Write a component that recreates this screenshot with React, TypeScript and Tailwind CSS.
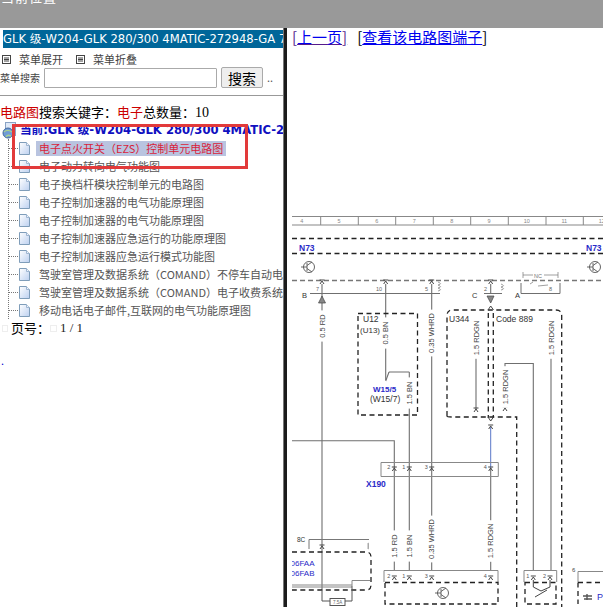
import React from "react";

const cjk = "font-['Noto_Sans_CJK_SC','Liberation_Sans',sans-serif]";

const items = [
  "电子点火开关（EZS）控制单元电路图",
  "电子动力转向电气功能图",
  "电子换档杆模块控制单元的电路图",
  "电子控制加速器的电气功能原理图",
  "电子控制加速器的电气功能原理图",
  "电子控制加速器应急运行的功能原理图",
  "电子控制加速器应急运行模式功能图",
  "驾驶室管理及数据系统（COMAND）不停车自动电子收费系统",
  "驾驶室管理及数据系统（COMAND）电子收费系统功能图",
  "移动电话电子邮件,互联网的电气功能原理图",
];

function PageIcon() {
  return (
    <svg width="13" height="15" viewBox="0 0 13 15" className="shrink-0">
      <defs>
        <linearGradient id="pg" x1="0" y1="0" x2="1" y2="1">
          <stop offset="0" stopColor="#ffffff" />
          <stop offset="1" stopColor="#bcd0f0" />
        </linearGradient>
      </defs>
      <path d="M1.5 1.5H8.5L11.5 4.5V13.5H1.5Z" fill="url(#pg)" stroke="#7f9db9" strokeWidth="1" />
      <path d="M8.5 1.5V4.5H11.5" fill="#eef4fc" stroke="#9fb6d2" strokeWidth="1" />
    </svg>
  );
}

function RootIcon() {
  return (
    <svg width="17" height="17" viewBox="0 0 17 17" className="shrink-0">
      <rect x="3.5" y="0.5" width="10" height="13" fill="#dfe9f7" stroke="#8aa3c4" />
      <circle cx="6" cy="11" r="5" fill="#6f9bd6" stroke="#41679e" />
      <path d="M2 10c2-2 5-2 8 0M4 15c1-2 3-2 5-1" stroke="#a8d08d" strokeWidth="1.4" fill="none" />
    </svg>
  );
}

function MenuGlyph() {
  return (
    <svg width="9" height="9" viewBox="0 0 9 9" className="shrink-0">
      <rect x="0.5" y="0.5" width="8" height="8" fill="none" stroke="#444" />
      <path d="M2 3H7M2 4.5H7M2 6H7" stroke="#444" />
    </svg>
  );
}

const G = "#6f6f6f";

function WireLabel({ x, y, t }: { x: number; y: number; t: string }) {
  return (
    <g transform={`translate(${x + 2.5} ${y}) rotate(-90)`}>
      <rect x={-t.length * 2.6} y={-6.5} width={t.length * 5.2} height={8} fill="#fff" />
      <text textAnchor="middle" fontSize="7.5" fill="#444" fontFamily="Liberation Sans">
        {t}
      </text>
    </g>
  );
}

function Pin({ x, y }: { x: number; y: number }) {
  return (
    <path
      d={`M${x - 2.5} ${y - 2}H${x + 2.5}M${x - 2} ${y + 2}L${x} ${y - 1}L${x + 2} ${y + 2}`}
      stroke="#444"
      strokeWidth="1"
      fill="none"
    />
  );
}

function Transistor({ x, y }: { x: number; y: number }) {
  return (
    <g stroke="#555" fill="none" strokeWidth="0.9">
      <circle cx={x} cy={y} r="5.5" />
      <path d={`M${x - 8} ${y}H${x - 2}M${x - 2} ${y - 4}V${y + 4}M${x - 2} ${y - 1.5}L${x + 3} ${y - 5}M${x - 2} ${y + 1.5}L${x + 3} ${y + 5}`} />
    </g>
  );
}

function Diagram() {
  const ticks = [320.7, 358.3, 395.7, 433.3, 470.7, 508.3, 546, 583.3];
  const nums = [
    [301.7, "4"], [339, "5"], [376.7, "6"], [414.3, "7"], [451.7, "8"],
    [489, "9"], [526.7, "10"], [564.3, "11"], [601.7, "12"],
  ] as const;
  const blue = "#2a2ac8";
  const dash = { stroke: "#222", strokeWidth: 1.3, strokeDasharray: "5 3.5", fill: "none" };
  return (
    <svg width="311" height="407" viewBox="292 200 311 407" className="block ml-[5px] shrink-0" fontFamily="Liberation Sans">
      {/* ruler */}
      <path d="M292 216.5H603M292 225H603" stroke="#888" strokeWidth="1.2" />
      {ticks.map((t) => (
        <path key={t} d={`M${t} 216V225`} stroke="#888" />
      ))}
      {nums.map(([x, n]) => (
        <text key={n} x={x} y="223" fontSize="5.5" fill="#888" textAnchor="middle">{n}</text>
      ))}
      <path d="M292 238.5H603M292 253.5H603" {...dash} />
      <text x="299" y="251" fontSize="8.5" fontWeight="bold" fill={blue}>N73</text>
      <text x="586" y="251" fontSize="8.5" fontWeight="bold" fill={blue}>N73</text>
      <Transistor x={309} y={267} />
      <Transistor x={595} y={267} />
      <path d="M292 280.5H603" stroke="#777" strokeWidth="1.4" strokeDasharray="5 3" />

      {/* top connector */}
      <path d="M310 293.5H440M484 293.5H502M521 293.5H560M521 293.5V283M560 293.5V283" stroke={G} fill="none" />
      <path d="M438 282q5 2 0 3q5 2 0 3q5 2 0 3M501 284q5 2 0 3q5 2 0 3" stroke="#777" fill="none" strokeWidth="0.7" />
      <path d="M523 272V278M558 272V278M523 275H533M544 275H558M530 284L533 282M538 286L548 285" stroke="#777" fill="none" strokeWidth="0.7" />
      <text x="534" y="277.5" fontSize="5.5" fill="#777">NC</text>
      <text x="302" y="298" fontSize="7.5" fill="#333">B</text>
      <text x="472" y="298" fontSize="7.5" fill="#333">C</text>
      <text x="515" y="298" fontSize="7.5" fill="#333">A</text>
      <text x="316" y="291" fontSize="5.5" fill="#666">7</text>
      <text x="376" y="291" fontSize="5.5" fill="#666">10</text>
      <text x="425" y="291" fontSize="5.5" fill="#666">5</text>
      <text x="484" y="291" fontSize="5.5" fill="#666">2</text>
      <text x="549" y="291" fontSize="5.5" fill="#666">8</text>

      {/* wires */}
      <path d="M322 284V590M385.7 284V380M431.7 284V570M490.7 284V293" stroke={G} strokeWidth="1.1" fill="none" />
      <path d="M292 440.7H394.3V570M409.3 372V570M389 372H409.3M385.7 381L389 372" stroke={G} strokeWidth="1.1" fill="none" />
      <path d="M490.7 427V468" stroke="#5a78c8" strokeWidth="1" />
      <path d="M490.7 468V570" stroke={G} strokeWidth="1.1" />
      <path d="M476 325V410M551 325V570M505 408V363.5H533.3V570" stroke={G} strokeWidth="1.1" fill="none" />
      <path d="M318.5 303L322 296L325.5 303ZM487 296H494L490.7 303Z" fill="#888" stroke="#444" strokeWidth="0.7" />
      {[322, 385.7, 431.7, 490.7].map((x) => <Pin key={x} x={x} y={282} />)}
      <Pin x={476} y={325} /><Pin x={551} y={325} /><Pin x={476} y={410} /><Pin x={505} y={409} /><Pin x={490.7} y={427} />

      {/* dashed modules */}
      <rect x="358" y="313.5" width="59.5" height="101.5" {...dash} />
      <path d="M447 416V316Q447 310 452 310H556Q561.7 310 561.7 316V607M447 416Q447 417 452 417H516.7V607M488.3 313V418M493.3 313V418" {...dash} />
      <path d="M488 310L490.7 306L493.5 310M488 417L490.7 421L493.5 417" stroke="#444" fill="none" />

      <text x="363" y="322" fontSize="8.5" fill="#333">U12</text>
      <text x="360" y="333" fontSize="8" fill="#333">(U13)</text>
      <text x="373" y="392" fontSize="8" fontWeight="bold" fill={blue}>W15/5</text>
      <text x="370" y="402" fontSize="8.5" fill="#333">(W15/7)</text>
      <text x="449" y="322" fontSize="8.5" fill="#333">U344</text>
      <text x="496" y="322" fontSize="8.5" fill="#333">Code 889</text>
      <WireLabel x={322} y={326} t="0.5 RD" />
      <WireLabel x={385.7} y={333} t="0.5 BN" />
      <WireLabel x={431.7} y={333} t="0.35 WHRD" />
      <WireLabel x={409.3} y={393} t="1.5 BN" />
      <WireLabel x={476} y={338} t="1.5 RDGN" />
      <WireLabel x={551} y={338} t="1.5 RDGN" />
      <WireLabel x={505} y={387} t="1.5 RDGN" />

      {/* X190 */}
      <path d="M381 476.5V462.5H498.3V476.5M381 476.5H498.3" stroke="#888" fill="none" />
      {[[394.3, "2"], [409.3, "1"], [431.7, "3"], [490.7, "4"]].map(([x, n]) => (
        <g key={n as string}>
          <Pin x={x as number} y={469} />
          <text x={(x as number) - 7} y="469" fontSize="5.5" fill="#555">{n}</text>
        </g>
      ))}
      <text x="366" y="487" fontSize="8.5" fontWeight="bold" fill={blue}>X190</text>
      <WireLabel x={394.3} y={546} t="1.5 RD" />
      <WireLabel x={409.3} y={546} t="1.5 BN" />
      <WireLabel x={431.7} y={539} t="0.35 WHRD" />
      <WireLabel x={490.7} y={541} t="1.5 RDGN" />

      {/* bottom connectors */}
      <path d="M384 582V570.5H498V582M524 582V570.5H556.7V582M578 582V571.5H603" stroke="#888" fill="none" />
      <path d="M385 582.5H498V604H385ZM525 582.5H556V604H525ZM578 582.5H603M578 582.5V604" {...dash} />
      {[[394.3, "2"], [409.3, "1"], [431.7, "3"], [490.7, "4"], [533.3, "1"], [550, "2"]].map(([x, n]) => (
        <g key={x as number}>
          <Pin x={x as number} y={578} />
          <text x={(x as number) - 7} y="578" fontSize="5.5" fill="#555">{n}</text>
        </g>
      ))}
      <text x="572" y="572" fontSize="6" fill="#444">6</text>
      <Transistor x={443} y={593} />
      <path d="M533.3 580V587L541 591L550 587V580M535 597L547 590" stroke="#444" fill="none" />
      <text x="597" y="600" fontSize="9" fill={blue}>P</text>
      <path d="M583 596H592M584 599H592M587 594V600" stroke="#555" strokeWidth="1.4" />

      {/* bottom left */}
      <text x="297" y="542" fontSize="6.5" fill="#333">8C</text>
      <path d="M309 549V539.5H369" stroke="#777" fill="none" />
      <path d="M369 543q-3 1 0 2q-3 1 0 2q-3 1 0 2" stroke="#777" fill="none" strokeWidth="0.7" />
      <path d="M292 552H366Q371 552 371 557V585Q371 590 366 590H292" {...dash} />
      <text x="290.5" y="566" fontSize="8" fill={blue}>06FAA</text>
      <text x="290.5" y="576" fontSize="8" fill={blue}>06FAB</text>
      <path d="M292 585H352M292 587H352M352 586V580.5H370" stroke="#888" fill="none" />
      <path d="M322 590V601H330M345 601H352V586" stroke="#555" fill="none" />
      <rect x="330" y="598.5" width="15" height="7" fill="#fff" stroke="#555" />
      <text x="333" y="604" fontSize="4.5" fill="#666">7.5A</text>
      <Pin x={322} y={547} />
    </svg>
  );
}

export default function App() {
  return (
    <div className={`w-[603px] h-[607px] overflow-hidden bg-white flex flex-col ${cjk}`}>
      <div className="h-[28px] bg-[#999999] overflow-hidden shrink-0">
        <div className="text-white text-[13px] leading-[14px] -mt-[10px] pl-[1px] tracking-[1px]">当前位置</div>
      </div>
      <div className="flex flex-1 min-h-0">
        {/* left */}
        <div className="w-[283px] shrink-0 relative overflow-hidden">
          <div className="mt-[2px] ml-[3px] h-[18px] bg-[#006699] text-white text-[11.6px] leading-[18px] whitespace-nowrap overflow-hidden font-['DejaVu_Sans','Noto_Sans_CJK_SC',sans-serif]">
            GLK 级-W204-GLK 280/300 4MATIC-272948-GA 7
          </div>
          <div className="flex items-center h-[18px] mt-[2px] pl-[2px] text-[11px] text-[#444] whitespace-nowrap">
            <MenuGlyph />
            <span className="ml-[8px] w-[57px]">菜单展开</span>
            <MenuGlyph />
            <span className="ml-[8px]">菜单折叠</span>
          </div>
          <div className="flex items-center h-[21px] mt-[-1px] whitespace-nowrap">
            <span className="text-[10px] text-[#444] w-[44px]">菜单搜索</span>
            <div className="w-[173px] h-[20px] border border-[#aaaaaa] bg-white rounded-[1px]" />
            <button className="ml-[4px] w-[42px] h-[21px] bg-[#eeeeee] border border-[#aaaaaa] rounded-[2px] text-[14px] leading-[18px] text-black">搜索</button>
            <span className="ml-[4px] text-[11px] text-[#555]">..</span>
          </div>
          <div className="h-px bg-[#999999] mt-[7px]" />
          <div className="mt-[7px] h-[18px] text-[13px] leading-[18px] whitespace-nowrap text-black">
            <span className="text-[#cc0000]">电路图</span>搜索关键字：<span className="text-[#cc0000]">电子</span>总数量：<span className="font-['Liberation_Serif',serif] text-[14px]">10</span>
          </div>
          <div className="flex items-center h-[17px] pl-[2px] mt-[1px] whitespace-nowrap">
            <RootIcon />
            <span className="ml-[1px] text-[11.6px] font-bold text-[#1010c0] font-['DejaVu_Sans','Noto_Sans_CJK_SC',sans-serif]">当前:GLK 级-W204-GLK 280/300 4MATIC-272948</span>
          </div>
          <ul className="ml-[8px] border-l border-dotted border-[#777777]">
            {items.map((t, i) => (
              <li key={i} className="flex items-center h-[18px] whitespace-nowrap text-[11px]">
                <span className="w-[9px] border-t border-dotted border-[#777777] shrink-0" />
                <PageIcon />
                {i === 0 ? (
                  <span className="ml-[5px] pl-[3px] pr-[3px] h-[15px] leading-[15px] bg-[#b9c4e0] text-[#d81e3a]">{t}</span>
                ) : (
                  <span className="ml-[8px] text-[#555555]">{t}</span>
                )}
              </li>
            ))}
          </ul>
          <div className="flex items-center h-[18px] whitespace-nowrap">
            <span className="ml-[2px] w-[6px] h-[7px] border border-[#eeeeee]" />
            <span className="ml-[3px] text-[13px] text-black w-[39px]">页号：</span>
            <span className="w-[7px] h-[7px] border border-[#eeeeee]" />
            <span className="ml-[3px] text-[13px] font-['Liberation_Serif',serif] text-[#222]">1 / 1</span>
          </div>
          <div className="mt-[17px] ml-[1px] text-[12px] leading-[14px] text-[#0000cc] font-['Liberation_Serif',serif]">.</div>
          <div className="absolute left-[12px] top-[96px] w-[236px] h-[45px] border-[3px] border-[#e23a3a]" />
        </div>
        <div className="w-[4px] shrink-0 bg-[#1c1c1c] border-l border-[#777777]" />
        {/* right */}
        <div className="flex-1 min-w-0 flex flex-col overflow-hidden">
          <div className="h-[172px] shrink-0 pl-[5px] text-[15px] leading-[17px] whitespace-nowrap">
            <a className="text-[#551a8b] underline"><span className="text-[#551a8b]">[</span><span className="text-[#0000ee]">上一页</span>]</a>
            <span className="ml-[10px] text-black">[<a className="text-[#0000ee] underline">查看该电路图端子</a>]</span>
          </div>
          <Diagram />
        </div>
      </div>
    </div>
  );
}
